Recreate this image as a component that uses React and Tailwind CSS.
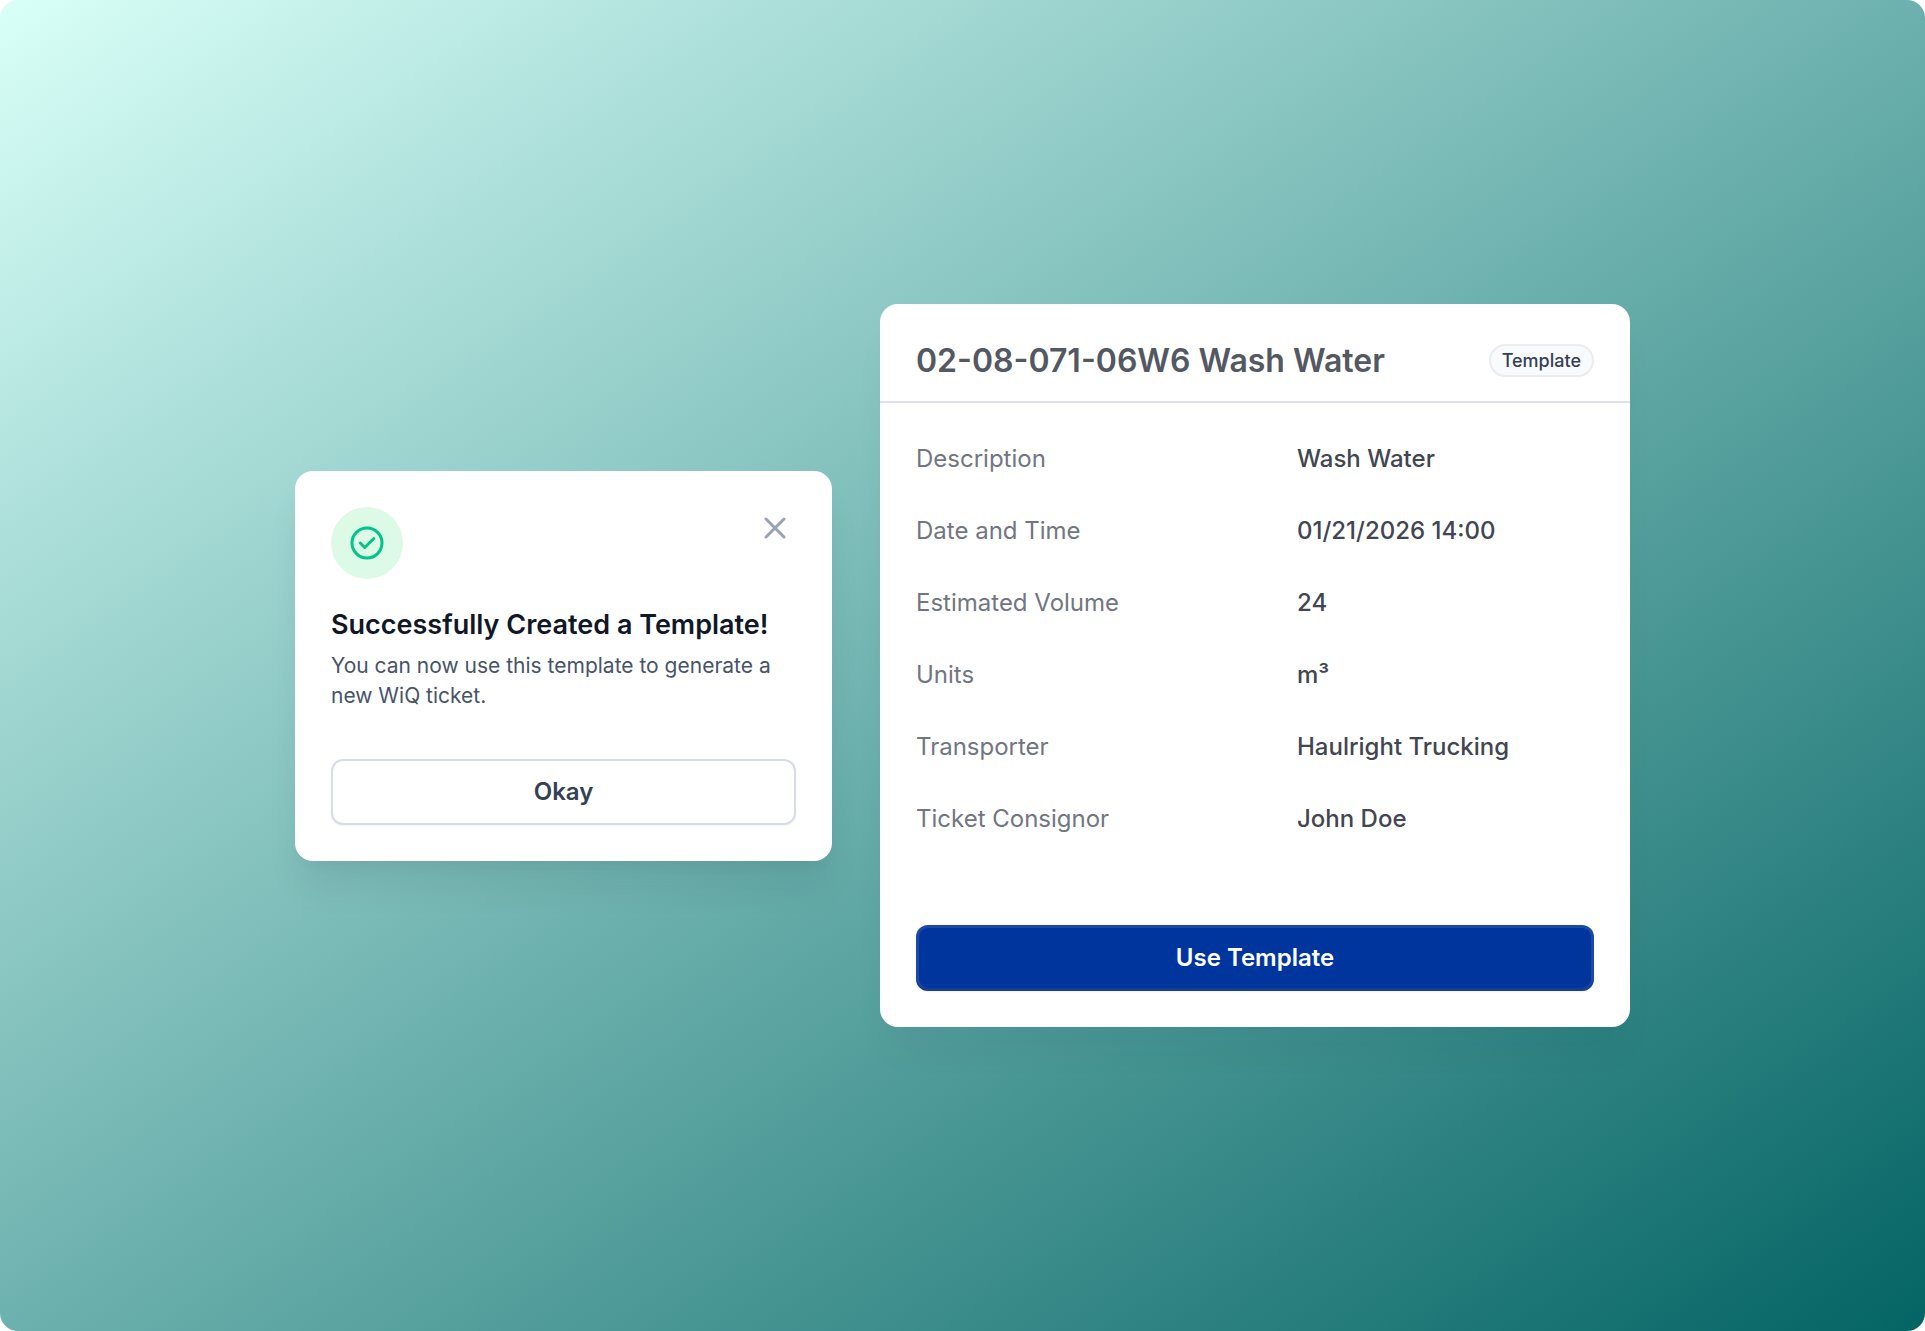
import React from "react";
import { X } from "lucide-react";

const details = [
  { label: "Description", value: "Wash Water" },
  { label: "Date and Time", value: "01/21/2026 14:00" },
  { label: "Estimated Volume", value: "24" },
  { label: "Units", value: "m³" },
  { label: "Transporter", value: "Haulright Trucking" },
  { label: "Ticket Consignor", value: "John Doe" },
];

const CheckCircleIcon = ({ className }) => (
  <svg
    className={className}
    viewBox="0 0 24 24"
    fill="none"
    stroke="currentColor"
    strokeWidth="2"
    strokeLinecap="round"
    strokeLinejoin="round"
    aria-hidden="true"
  >
    <circle cx="12" cy="12" r="10" />
    <path d="M7.5 12l3 3 6-6" />
  </svg>
);

const SuccessDialog = () => (
  <section
    role="dialog"
    aria-labelledby="success-title"
    className="w-[537px] rounded-[18px] bg-white p-9 shadow-[0_30px_36px_-6px_rgba(16,24,40,0.08),0_12px_12px_-6px_rgba(16,24,40,0.03)]"
  >
    <div className="flex items-start justify-between">
      <div className="flex size-18 items-center justify-center rounded-full bg-[#dcfae6]">
        <CheckCircleIcon className="size-9 text-[#00c48c]" />
      </div>
      <button
        type="button"
        aria-label="Close"
        className="flex size-[42px] items-center justify-center text-[#98a2b3]"
      >
        <X className="size-9" strokeWidth={2} />
      </button>
    </div>

    <h2
      id="success-title"
      className="mt-[25px] text-[27px] leading-[42px] font-semibold text-[#101828]"
    >
      Successfully Created a Template!
    </h2>
    <p className="mt-[5px] text-[21px] leading-[30px] text-[#475467]">
      You can now use this template to generate a new WiQ ticket.
    </p>

    <button
      type="button"
      className="mt-12 h-[66px] w-full rounded-xl border-2 border-[#d8dce5] bg-white text-2xl font-semibold text-[#344054] shadow-xs"
    >
      Okay
    </button>
  </section>
);

const TemplateCard = () => (
  <section className="w-[750px] rounded-[18px] bg-white shadow-[0_30px_36px_-6px_rgba(16,24,40,0.04)]">
    <header className="flex h-[99px] items-center justify-between border-b-2 border-[#dfe0e8] px-9 pt-4">
      <h1 className="text-[32px] leading-[48px] font-semibold text-[#535862]">
        02-08-071-06W6 Wash Water
      </h1>
      <span className="flex h-[33px] items-center rounded-full border-2 border-[#eaecf0] bg-[#f9fafb] px-[11px] text-lg font-medium text-[#344054]">
        Template
      </span>
    </header>

    <dl className="flex flex-col gap-9 px-9 pt-[38px]">
      {details.map((item) => (
        <div key={item.label} className="flex text-2xl leading-9">
          <dt className="w-[381px] text-[#717680]">{item.label}</dt>
          <dd className="font-medium text-[#414651]">{item.value}</dd>
        </div>
      ))}
    </dl>

    <div className="px-9 pt-[88px] pb-9">
      <button
        type="button"
        className="h-[66px] w-full rounded-xl bg-[#00359e] text-2xl font-semibold text-white shadow-[inset_0_-3px_0_rgba(16,24,40,0.18),inset_0_0_0_3px_rgba(255,255,255,0.1),0_1px_2px_rgba(16,24,40,0.05)]"
      >
        Use Template
      </button>
    </div>
  </section>
);

const App = () => {
  return (
    <main className="flex min-h-screen flex-wrap items-center justify-center gap-12 rounded-[18px] bg-[linear-gradient(to_bottom_right,#d9fff8,#6db1ae_50%,#046464)] font-['Inter',sans-serif]">
      <SuccessDialog />
      <TemplateCard />
    </main>
  );
};

export default App;
